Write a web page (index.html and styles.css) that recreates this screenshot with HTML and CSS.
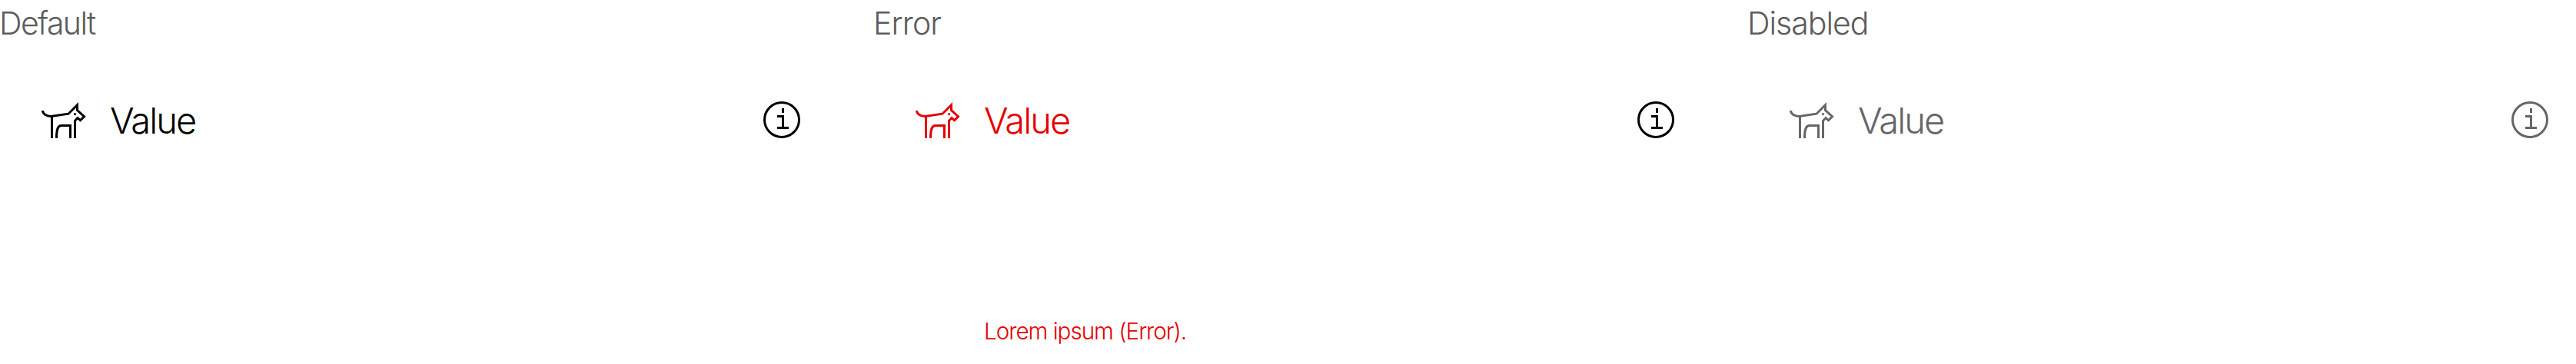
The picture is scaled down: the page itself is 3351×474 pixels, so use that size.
FILE: index.html
```
<!DOCTYPE html>
<html lang="en">
<head>
<meta charset="utf-8">
<title>Input states</title>
<link rel="stylesheet" href="styles.css">
</head>
<body>
<svg class="sprite" aria-hidden="true">
  <symbol id="dog" viewBox="0 0 60 60">
    <path d="M3.5 18C3.5 22 8 25.4 14.5 25.4L37 22.2L48.5 10.7V17.5L57.5 25.7L52.5 30.7L49 27.5L45.5 31.3V54M15.5 25V54M21.5 54C21.5 43 23 37.5 28 37.5H39.5V54" fill="none" stroke="currentColor" stroke-width="3"/>
    <circle cx="45.5" cy="22.6" r="1.6" fill="currentColor"/>
  </symbol>
  <symbol id="info" viewBox="0 0 60 60">
    <circle cx="30" cy="30" r="22.5" fill="none" stroke="currentColor" stroke-width="3"/>
    <path d="M31.5 15V21M24 25.5H31.5V40M24 40.5H39" fill="none" stroke="currentColor" stroke-width="3"/>
  </symbol>
</svg>
<main class="states">
  <section class="state">
    <h2 class="label label-default">Default</h2>
    <div class="field"><svg class="icon"><use href="#dog"/></svg><span class="value">Value</span><svg class="icon info"><use href="#info"/></svg></div>
  </section>
  <section class="state error">
    <h2 class="label label-error">Error</h2>
    <div class="field"><svg class="icon"><use href="#dog"/></svg><span class="value">Value</span><svg class="icon info"><use href="#info"/></svg></div>
    <p class="message">Lorem ipsum (Error).</p>
  </section>
  <section class="state disabled">
    <h2 class="label label-disabled">Disabled</h2>
    <div class="field"><svg class="icon"><use href="#dog"/></svg><span class="value">Value</span><svg class="icon info"><use href="#info"/></svg></div>
  </section>
</main>
</body>
</html>
```
FILE: styles.css
```
* { box-sizing: border-box; }
body {
  margin: 0;
  background: #fff;
  color: #000;
  font-family: Inter, "Liberation Sans", sans-serif;
  font-weight: 300;
  overflow: hidden;
}
.sprite { display: none; }
.states { display: grid; grid-template-columns: repeat(3, 1077px); gap: 60px; height: 474px; }
.state { display: flex; flex-direction: column; }
.label {
  margin: 0 0 0 -1px;
  height: 60px;
  line-height: 60px;
  font-size: 41px;
  font-weight: 300;
  color: #5c5c5c;
}
.label-default { letter-spacing: -1.6px; }
.label-error { letter-spacing: -0.9px; }
.label-disabled { letter-spacing: -1px; }
.field { display: flex; align-items: center; height: 60px; margin-top: 66px; padding: 0 30px 0 52px; }
.icon { width: 60px; height: 60px; flex: none; }
.value { margin-left: 31px; padding-top: 2px; font-size: 47px; line-height: 60px; letter-spacing: -1.9px; }
.info { margin-left: auto; }
.message {
  margin: 225px 0 0 143px;
  height: 40px;
  line-height: 40px;
  font-size: 29.6px;
  letter-spacing: -1px;
  color: #e60000;
}
.error .field { color: #e60000; }
.error .info { color: #000; }
.disabled .field { color: #666; }
```
